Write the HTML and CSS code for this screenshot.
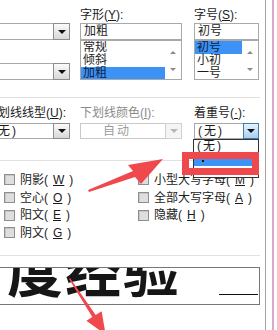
FILE: index.html
```html
<!DOCTYPE html>
<html>
<head>
    <title>字体</title>
    <link rel="stylesheet" href="styles.css">
</head>
<body>

    <div class="frame">
        <div class="dialog">

            <div class="sec top">
                <div class="col c1">
                    <div class="combo"><span class="val"></span><span class="btn"><i></i></span></div>
                    <div class="combo"><span class="val"></span><span class="btn"><i></i></span></div>
                </div>
                <div class="col c2">
                    <div class="lbl">字形(<u>Y</u>):</div>
                    <div class="field">加粗</div>
                    <div class="list">
                        <div class="items">
                            <div>常规</div>
                            <div>倾斜</div>
                            <div class="sel">加粗</div>
                        </div>
                        <div class="scroll"><i class="up"></i><i class="down"></i></div>
                    </div>
                </div>
                <div class="col c3">
                    <div class="lbl">字号(<u>S</u>):</div>
                    <div class="field">初号</div>
                    <div class="list">
                        <div class="items">
                            <div class="sel">初号</div>
                            <div>小初</div>
                            <div>一号</div>
                        </div>
                        <div class="scroll"><i class="up"></i><i class="down"></i></div>
                    </div>
                </div>
            </div>

            <div class="sec mid">
                <div class="col c1">
                    <div class="lbl">下划线线型(<u>U</u>):</div>
                    <div class="combo"><span class="val">(无)</span><span class="btn"><i></i></span></div>
                </div>
                <div class="col c2">
                    <div class="lbl grey">下划线颜色(<u>I</u>):</div>
                    <div class="combo off"><span class="val">自动</span><span class="btn"><i></i></span></div>
                </div>
                <div class="col c3">
                    <div class="lbl">着重号(<u>·</u>):</div>
                    <div class="combo focus"><span class="val">(无)</span><span class="btn"><i></i></span></div>
                </div>
            </div>

            <div class="sec effects">
                <div class="opts">
                    <div class="opt"><span class="cb"></span>删除线(<u>K</u>)</div>
                    <div class="opt"><span class="cb"></span>双删除线(<u>L</u>)</div>
                    <div class="opt"><span class="cb"></span>上标(<u>P</u>)</div>
                    <div class="opt"><span class="cb"></span>下标(<u>B</u>)</div>
                </div>
                <div class="opts">
                    <div class="opt"><span class="cb"></span>阴影(<u>W</u>)</div>
                    <div class="opt"><span class="cb"></span>空心(<u>O</u>)</div>
                    <div class="opt"><span class="cb"></span>阳文(<u>E</u>)</div>
                    <div class="opt"><span class="cb"></span>阴文(<u>G</u>)</div>
                </div>
                <div class="opts">
                    <div class="opt"><span class="cb"></span>小型大写字母(<u>M</u>)</div>
                    <div class="opt"><span class="cb"></span>全部大写字母(<u>A</u>)</div>
                    <div class="opt"><span class="cb"></span>隐藏(<u>H</u>)</div>
                </div>
            </div>

            <div class="pv">
                <div class="preview">
                    <span class="sample">百度经验</span>
                    <span class="mark"></span>
                </div>
            </div>

        </div>
        <div class="edge"></div>
    </div>

    <!-- open list of 着重号 -->
    <div class="droplist">
        <div>(无)</div>
        <div class="hi"><span class="dot"></span></div>
    </div>

    <!-- annotations -->
    <div class="redbox"></div>
    <svg class="arrows" width="277" height="330" viewBox="0 0 277 330">
        <polygon points="88,190 133,171 128,165 163,159 141,184 135,177 89,192" fill="#f0494d"/>
        <polygon points="70,278 95.7,314.9 101.6,311.2 105.7,334.6 86.4,320.8 92.3,317.1 69,279" fill="#f0494d"/>
    </svg>

</body>
</html>
```

FILE: styles.css
```css
body {
    margin: 0;
    width: 277px;
    height: 330px;
    overflow: hidden;
    position: relative;
    background: #fff;
    font-family: "Liberation Sans", "Noto Sans CJK SC", sans-serif;
    font-size: 12px;
    color: #1b1b1b;
}
u {
    text-decoration: underline;
}
.frame {
    display: flex;
    height: 330px;
}
.dialog {
    flex: none;
    margin-left: -90px;
    width: 350px;
    padding-right: 5px;
    border-right: 1px solid #a3a3a3;
}
.edge {
    flex: none;
    margin-left: 6px;
    width: 2px;
    background: #d8a8d0;
}
.sec {
    display: flex;
    border-bottom: 1px solid #e2e2e2;
}
.col {
    flex: none;
    display: flex;
    flex-direction: column;
}
.c1 {
    width: 160px;
    box-sizing: border-box;
}
.c2 {
    width: 102px;
    margin-left: 10px;
}
.c3 {
    width: 65px;
    margin-left: 12px;
}

/* top block */
.top {
    height: 97px;
}
.top .c1 {
    padding-top: 23px;
    gap: 23px;
}
.lbl {
    height: 16px;
    line-height: 16px;
    margin-top: 7px;
    white-space: nowrap;
}
.grey {
    color: #8a8a8a;
}
.field {
    height: 17px;
    box-sizing: border-box;
    border: 1px solid #a9a9a9;
    line-height: 15px;
    padding-left: 3px;
}
.list {
    height: 40px;
    box-sizing: border-box;
    border: 1px solid #a9a9a9;
    display: flex;
    overflow: hidden;
}
.items {
    flex: 1;
}
.items div {
    height: 13px;
    line-height: 13px;
    padding-left: 2px;
    white-space: nowrap;
}
.items .sel {
    background: #3d92f5;
    color: #0c1c44;
}
.scroll {
    width: 16px;
    display: flex;
    flex-direction: column;
    align-items: center;
    padding-top: 10px;
    gap: 14px;
}
.scroll i {
    display: block;
    width: 0;
    height: 0;
    border-left: 3px solid transparent;
    border-right: 3px solid transparent;
}
.scroll .up {
    border-bottom: 3px solid #8a8a8a;
}
.scroll .down {
    border-top: 3px solid #8a8a8a;
}

/* combos */
.combo {
    display: flex;
    height: 17px;
    box-sizing: border-box;
    border: 1px solid #a9a9a9;
    background: #fff;
}
.val {
    flex: 1;
    line-height: 15px;
    padding-left: 3px;
    white-space: nowrap;
    overflow: hidden;
    letter-spacing: 2px;
}
.btn {
    flex: none;
    width: 17px;
    margin: -1px -1px -1px 0;
    box-sizing: border-box;
    border: 1px solid #8d8d8d;
    background: linear-gradient(#fbfbfb, #d8d8d8);
    display: flex;
    align-items: center;
    justify-content: center;
}
.btn i {
    display: block;
    width: 0;
    height: 0;
    border-left: 4px solid transparent;
    border-right: 4px solid transparent;
    border-top: 4px solid #111;
}

/* underline / emphasis row */
.mid {
    height: 62px;
}
.mid .c1 {
    padding-left: 72px;
}
.mid .c1 .lbl {
    padding-left: 4px;
}
.mid .combo {
    margin-top: 2px;
    height: 16px;
}
.mid .val {
    line-height: 14px;
}
.mid .c1 .val {
    padding-left: 9px;
}
.combo.off {
    border-color: #c9c9c9;
}
.off .val {
    color: #9b9b9b;
    padding-left: 22px;
}
.off .btn {
    border-color: #d0d0d0;
    background: #f5f5f5;
}
.off .btn i {
    border-top-color: #b8b8b8;
}
.focus .btn {
    width: 16px;
    border-color: #3d7bad;
    background: linear-gradient(#e6f3fd, #a6cff1);
}

/* effects */
.effects {
    display: grid;
    grid-template-columns: 94px 134px 1fr;
    height: 84px;
    padding-top: 10px;
}
.opt {
    display: flex;
    align-items: center;
    gap: 5px;
    height: 17.7px;
    line-height: 14px;
    white-space: nowrap;
}
.cb {
    flex: none;
    width: 11px;
    height: 11px;
    box-sizing: border-box;
    border: 1px solid #8e8e8e;
    background: #dedede;
    box-shadow: inset 1px 1px 0 #c6c6c6;
}

/* preview */
.pv {
    padding-top: 11px;
}
.preview {
    margin-left: 20px;
    width: 330px;
    height: 38px;
    box-sizing: border-box;
    border: 1px solid #777;
    padding-left: 18px;
    display: flex;
    align-items: flex-start;
    overflow: hidden;
}
.sample {
    flex: none;
    font-family: "Noto Sans CJK SC", sans-serif;
    font-size: 56px;
    line-height: 56px;
    font-weight: 700;
    letter-spacing: 2px;
    margin-top: -28px;
    white-space: nowrap;
    color: #161616;
}
.mark {
    flex: none;
    margin-left: auto;
    margin-right: 1px;
    margin-top: 26px;
    width: 39px;
    height: 1px;
    background: #111;
}

/* open dropdown + annotations */
.droplist {
    position: absolute;
    left: 193px;
    top: 139px;
    width: 66px;
    height: 39px;
    box-sizing: border-box;
    border: 1px solid #333;
    background: #fff;
}
.droplist div {
    height: 13px;
    line-height: 13px;
    padding-left: 3px;
    letter-spacing: 2px;
}
.droplist .hi {
    background: #3d92f5;
    position: relative;
}
.dot {
    position: absolute;
    left: 8px;
    top: 7px;
    width: 2px;
    height: 2px;
    background: #111;
}
.redbox {
    position: absolute;
    left: 182px;
    top: 152px;
    width: 77px;
    height: 23px;
    box-sizing: border-box;
    border: 7px solid #f0494d;
}
.arrows {
    position: absolute;
    left: 0;
    top: 0;
}
```
